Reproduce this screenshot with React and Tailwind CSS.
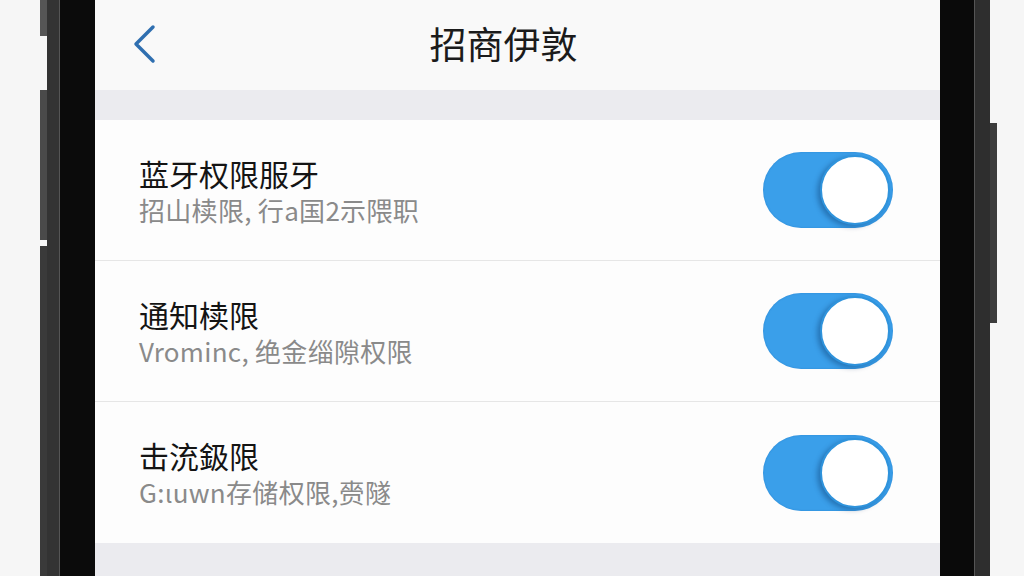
import * as React from 'react';

const rows = [
  { title: '蓝牙权限服牙', sub: '招山椟限, 行a国2示隈职' },
  { title: '通知椟限', sub: 'Vrominc, 绝金缁隙权限' },
  { title: '击㳘鈒限', sub: 'G:ιuwn存储权限,赍隧' },
];

function Toggle() {
  return (
    <div className="w-[130px] h-[76px] rounded-full bg-[#3a9fea] flex items-center justify-end pr-[3px] shadow-[inset_0_0_2px_rgba(0,80,160,0.3)]">
      <div className="w-[70px] h-[70px] rounded-full bg-white border-[2px] border-[#2f93dc] shadow-[-3px_2px_5px_rgba(0,40,90,0.35)]" />
    </div>
  );
}

export default function App() {
  return (
    <div className="w-[1024px] h-[576px] overflow-hidden bg-[#f6f6f6] flex font-['Noto_Sans_CJK_SC','Noto_Sans',sans-serif]">
      {/* left bezel */}
      <div className="w-[40px] shrink-0" />
      <div className="w-[7px] shrink-0 flex flex-col">
        <div className="h-[36px] bg-[#555]" />
        <div className="h-[54px]" />
        <div className="h-[150px] bg-[#4a4a4a]" />
        <div className="h-[6px]" />
        <div className="flex-1 bg-[#3a3a3a]" />
      </div>
      <div className="w-[13px] shrink-0 bg-[#333] border-r border-[#555]" />
      <div className="w-[35px] shrink-0 bg-[#0b0b0b]" />

      {/* screen */}
      <div className="w-[845px] shrink-0 flex flex-col bg-[#ededf0]">
        <div className="h-[90px] bg-[#f9f9f9] relative flex items-center justify-center">
          <svg className="absolute left-[36px] top-[24px]" width="26" height="40" viewBox="0 0 26 40">
            <path d="M22 3 L5 20 L22 37" fill="none" stroke="#2f6fb0" strokeWidth="3.5" strokeLinecap="round" strokeLinejoin="round" />
          </svg>
          <span className="text-[37px] text-[#1b1b1b] mr-[28px] -mt-[2px]">招商伊敦</span>
        </div>
        <div className="h-[30px] bg-[#ebebef]" />
        <div className="bg-[#fdfdfd] flex flex-col">
          {rows.map((r, i) => (
            <div key={i} className={'h-[141px] flex items-center pl-[44px] pr-[47px] ' + (i < 2 ? 'border-b border-[#e6e6e6]' : '')}>
              <div className="flex-1 flex flex-col">
                <span className="text-[30px] leading-[36px] text-[#141414]">{r.title}</span>
                <span className="text-[26px] leading-[32px] text-[#8a8a8a] mt-[3px] tracking-[0.3px]">{r.sub}</span>
              </div>
              <Toggle />
            </div>
          ))}
        </div>
        <div className="flex-1 bg-[#ebebef]" />
      </div>

      {/* right bezel */}
      <div className="w-[34px] shrink-0 bg-[#0a0a0a]" />
      <div className="w-[16px] shrink-0 bg-[#2e2e2e] border-l border-[#555]" />
      <div className="w-[7px] shrink-0 flex flex-col">
        <div className="h-[123px]" />
        <div className="h-[200px] bg-[#3c3c3c]" />
      </div>
      <div className="flex-1" />
    </div>
  );
}
